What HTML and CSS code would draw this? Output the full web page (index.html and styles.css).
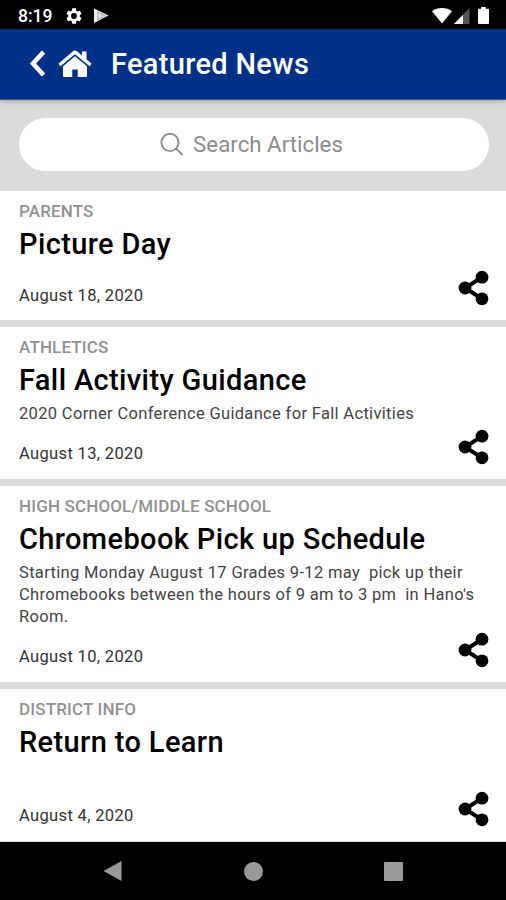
FILE: index.html
```html
<!DOCTYPE html>
<html lang="en">
<head>
    <meta charset="UTF-8">
    <meta name="viewport" content="width=device-width, initial-scale=1.0">
    <title>Featured News</title>
    <link rel="stylesheet" href="styles.css">
</head>
<body>
    <svg class="hidden">
        <symbol id="share" viewBox="0 0 32 36">
            <path d="M24 7.2 7 18l17 10.800" fill="none" stroke="#000" stroke-width="4"/>
            <circle cx="24" cy="7.200" r="6.400"/>
            <circle cx="7" cy="18" r="6.400"/>
            <circle cx="24" cy="28.800" r="6.400"/>
        </symbol>
    </svg>

    <div class="status-bar">
        <span class="clock">8:19</span>
        <svg class="gear" width="16" height="16" viewBox="2 2 20 20" fill="#fff"><path d="M19.140 12.940c.04-.3.060-.61.060-.94 0-.32-.02-.64-.07-.94l2.030-1.580c.18-.14.230-.41.120-.61l-1.920-3.320c-.12-.22-.37-.29-.59-.22l-2.390.960c-.5-.38-1.030-.7-1.620-.94l-.36-2.540c-.04-.24-.24-.41-.48-.41h-3.840c-.24 0-.43.170-.47.410l-.36 2.540c-.59.240-1.130.570-1.620.940l-2.390-.96c-.22-.08-.47 0-.59.220L2.740 8.870c-.12.210-.08.470.120.610l2.030 1.580c-.05.300-.09.630-.09.940s.02.640.070.940l-2.030 1.580c-.18.140-.23.410-.12.610l1.920 3.320c.12.220.370.290.590.220l2.390-.96c.5.380 1.030.700 1.620.940l.36 2.540c.05.240.240.410.480.410h3.840c.24 0 .440-.17.470-.41l.36-2.540c.59-.24 1.130-.56 1.620-.94l2.390.960c.22.080.470 0 .590-.22l1.920-3.320c.12-.22.070-.47-.12-.61l-2.010-1.580zM12 15.600A3.600 3.600 0 1 1 12 8.400a3.600 3.600 0 0 1 0 7.200z"/></svg>
        <svg class="play" width="16" height="16" viewBox="0 0 16 16"><path d="M1 0.500 15.500 7.500 1 15z" fill="#eee"/><path d="M5 3.500v8.500L9.500 8zM8 5l4 3-4 3" fill="none" stroke="#999" stroke-width="0.900"/></svg>
        <div class="signals">
            <svg width="20" height="16" viewBox="0 0 20 16"><path d="M0 3.300C5.500-1 14.500-1 20 3.300L10 15.500z" fill="#fff"/></svg>
            <svg class="cell" width="16" height="16" viewBox="0 0 16 16"><path d="M0 16 15.500 0v16z" fill="#555"/><path d="M0 16 9 6.700V16z" fill="#fff"/></svg>
            <svg class="battery" width="11" height="17" viewBox="0 0 11 17"><path d="M3.200 0h4.600v1.700H10q1 0 1 1V16q0 1-1 1H1q-1 0-1-1V2.700q0-1 1-1h2.200z" fill="#fff"/></svg>
        </div>
    </div>

    <header class="header">
        <svg width="16" height="27" viewBox="0 0 16 27"><path d="M14.500 2 4 13.500 14.500 25" fill="none" stroke="#fff" stroke-width="4.600"/></svg>
        <svg class="home" width="34" height="28" viewBox="0 0 34 28" fill="#fff">
            <path d="M17 0.500q1 0 2 .8l5 4.200V1.500h4.500v7.800l5.100 4.400-2 2.600L17 4.300 2.400 16.300l-2-2.600L15 1.300q1-.8 2-.8z"/>
            <path d="M17 6.300 29 16.200V26q0 1-1 1H19.700v-7.500h-5.400V27H6q-1 0-1-1v-9.800z"/>
        </svg>
        <h1 class="header-title">Featured News</h1>
    </header>

    <div class="search">
        <div class="search-box">
            <svg width="24" height="24" viewBox="0 0 24 24" fill="none" stroke="#8d8d8d" stroke-width="1.900"><circle cx="10" cy="9.500" r="8.600"/><path d="m16 15.500 6.700 6.700"/></svg>
            <span class="search-text">Search Articles</span>
        </div>
    </div>

    <main class="articles">
        <article class="card">
            <div class="category">PARENTS</div>
            <h2 class="title">Picture Day</h2>
            <div class="footer">
                <span class="date">August 18, 2020</span>
                <svg class="share"><use href="#share"/></svg>
            </div>
        </article>
        <article class="card">
            <div class="category">ATHLETICS</div>
            <h2 class="title">Fall Activity Guidance</h2>
            <p class="summary">2020 Corner Conference Guidance for Fall Activities</p>
            <div class="footer">
                <span class="date">August 13, 2020</span>
                <svg class="share"><use href="#share"/></svg>
            </div>
        </article>
        <article class="card">
            <div class="category">HIGH SCHOOL/MIDDLE SCHOOL</div>
            <h2 class="title">Chromebook Pick up Schedule</h2>
            <p class="summary">Starting Monday August 17 Grades 9-12 may&nbsp; pick up their<br>Chromebooks between the hours of 9 am to 3 pm&nbsp; in Hano's<br>Room.</p>
            <div class="footer">
                <span class="date">August 10, 2020</span>
                <svg class="share"><use href="#share"/></svg>
            </div>
        </article>
        <article class="card">
            <div class="category">DISTRICT INFO</div>
            <h2 class="title">Return to Learn</h2>
            <p class="summary">&nbsp;</p>
            <div class="footer">
                <span class="date">August 4, 2020</span>
                <svg class="share"><use href="#share"/></svg>
            </div>
        </article>
    </main>

    <nav class="nav-bar">
        <svg width="19" height="22" viewBox="0 0 19 22"><path d="M18.500 1v20L0.500 11z" fill="#999"/></svg>
        <span class="nav-home"></span>
        <span class="nav-recent"></span>
    </nav>
</body>
</html>
```
FILE: styles.css
```css
* {
    box-sizing: border-box;
}

body {
    margin: 0;
    height: 900px;
    overflow: hidden;
    display: flex;
    flex-direction: column;
    font-family: Roboto, sans-serif;
    background: #dbdbdb;
    color: #000;
}

h1, h2, p {
    margin: 0;
}

svg {
    display: block;
    flex: none;
}

.hidden {
    display: none;
}

.status-bar {
    height: 29px;
    flex: none;
    display: flex;
    align-items: center;
    padding: 2px 17px 0 18px;
    background: #000;
    color: #fff;
}

.clock {
    width: 48px;
    font-size: 17.5px;
    font-weight: 500;
    line-height: 20px;
}

.play {
    margin-left: 11px;
}

.signals {
    margin-left: auto;
    display: flex;
    align-items: center;
}

.cell {
    margin-left: 2px;
}

.battery {
    margin-left: 8px;
}

.header {
    height: 71px;
    flex: none;
    display: flex;
    align-items: center;
    padding: 0 0 1px 29px;
    background: #003087;
    color: #fff;
    border-bottom: 1px solid #40577f;
    box-shadow: 0 1px 5px rgba(0, 0, 0, 0.3);
    z-index: 1;
}

.home {
    margin-left: 13px;
}

.header-title {
    margin-left: 19px;
    font-size: 29px;
    font-weight: 500;
    line-height: 36px;
    letter-spacing: 0.3px;
}

.search {
    height: 91px;
    flex: none;
    padding: 18px 17px 0 19px;
}

.search-box {
    height: 53px;
    display: flex;
    align-items: center;
    justify-content: center;
    gap: 9px;
    border-radius: 27px;
    background: #fff;
    color: #8d8d8d;
    padding-right: 5px;
}

.search-text {
    font-size: 22.3px;
    line-height: 28px;
    padding-bottom: 2px;
}

.articles {
    height: 651px;
    flex: none;
    overflow: hidden;
    display: flex;
    flex-direction: column;
    gap: 7px;
}

.card {
    flex: none;
    padding: 10px 16px 13.8px 19px;
    background: #fff;
}

.category {
    font-size: 17px;
    font-weight: 500;
    line-height: 20px;
    letter-spacing: 0.15px;
    color: #929292;
}

.title {
    margin-top: 5px;
    font-size: 29px;
    font-weight: 500;
    line-height: 36px;
    letter-spacing: 0.37px;
    white-space: nowrap;
}

.summary {
    margin-top: 4.5px;
    margin-bottom: -4.5px;
    font-size: 16.5px;
    line-height: 22.2px;
    letter-spacing: 0.33px;
    color: #444;
    white-space: nowrap;
}

.footer {
    height: 22px;
    margin-top: 22.7px;
    display: flex;
    justify-content: space-between;
    align-items: center;
}

.date {
    font-size: 16.5px;
    line-height: 22px;
    letter-spacing: 0.35px;
    color: #333;
}

.share {
    width: 32px;
    height: 36px;
    margin-top: -15px;
}

.nav-bar {
    height: 58px;
    flex: none;
    display: flex;
    align-items: center;
    padding-left: 103px;
    background: #000;
}

.nav-home {
    width: 19px;
    height: 19px;
    margin-left: 122px;
    border-radius: 50%;
    background: #999;
}

.nav-recent {
    width: 19px;
    height: 19px;
    margin-left: 121px;
    border-radius: 1px;
    background: #999;
}
```
